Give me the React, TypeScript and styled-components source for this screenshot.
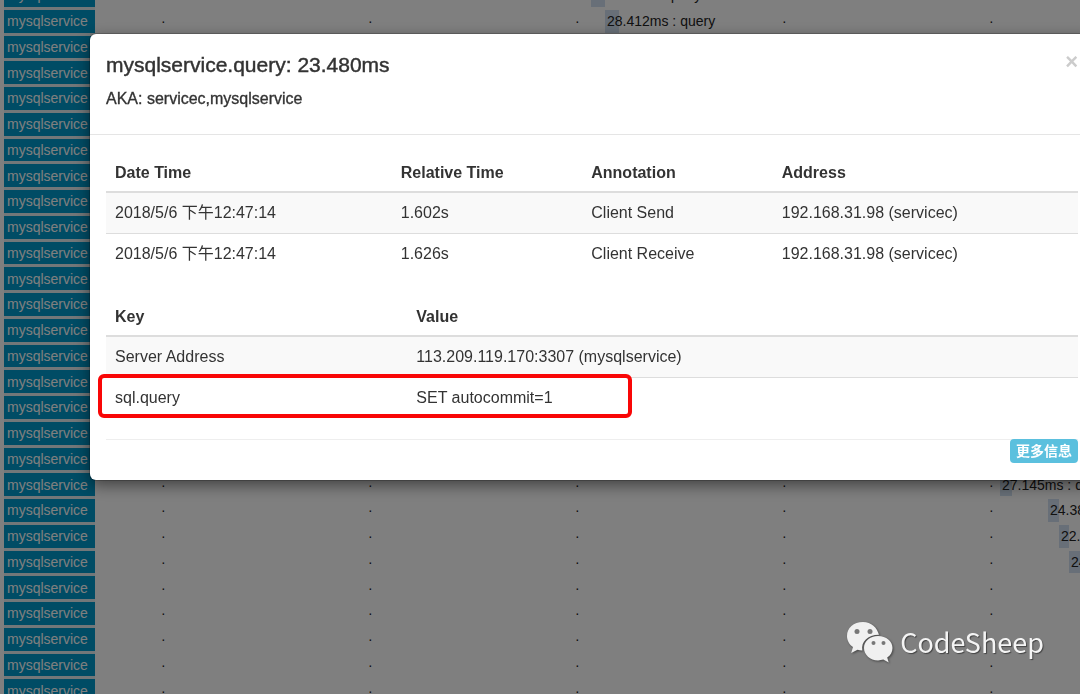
import React from "react";
import styled, { createGlobalStyle } from "styled-components";

const GlobalStyle = createGlobalStyle`
  *, *::before, *::after { box-sizing: border-box; }
  html, body { margin: 0; height: 100%; }
  body {
    overflow: hidden;
    background: #fff;
    color: #333;
    font-family: "Liberation Sans", "Noto Sans CJK SC", sans-serif;
    font-size: 16px;
    line-height: 20px;
  }
`;

const Trace = styled.main`
  display: flex;
  flex-direction: column;
  height: calc(100vh + 27px);
  margin-top: -16px;
  padding-left: 4px;
  overflow: hidden;
`;

const TraceRow = styled.div`
  display: flex;
  flex: 1;
  font-size: 14px;
`;

const Service = styled.div`
  display: flex;
  flex: none;
  align-items: center;
  width: 91px;
  padding-left: 3px;
  border-bottom: 3px solid #e4eff3;
  background: #0098ca;
  color: #fff;
`;

const Timeline = styled.div`
  position: relative;
  display: grid;
  flex: 1;
  grid-template-columns: repeat(5, 207px);
  align-items: center;
  min-width: 0;
  padding-left: 66px;
  padding-bottom: 3px;
  color: #222;
`;

const Span = styled.div<{ $left: number; $width: number }>`
  position: absolute;
  top: 0;
  bottom: 3px;
  left: ${(p) => p.$left}px;
  display: flex;
  align-items: center;
  width: ${(p) => p.$width}px;
  padding-left: 2px;
  background: #d0dff0;
  white-space: nowrap;
`;

const Backdrop = styled.div`
  position: fixed;
  inset: 0;
  overflow: hidden;
  padding: 34px 0 0 90px;
  background: rgba(0, 0, 0, 0.5);
`;

const Dialog = styled.section`
  margin-right: -14px;
  border-radius: 6px;
  background: #fff;
  box-shadow: 0 0 0 1px rgba(0, 0, 0, 0.2), 0 5px 16px rgba(0, 0, 0, 0.5);
`;

const DialogHeader = styled.header`
  display: flex;
  justify-content: space-between;
  height: 101px;
  padding: 16px 16px 0;
  border-bottom: 1px solid #e5e5e5;
`;

const Title = styled.h1`
  margin: 3px 0 12px;
  font-size: 21px;
  font-weight: 400;
  line-height: 24px;
  -webkit-text-stroke: thin;
`;

const Subtitle = styled.h2`
  margin: 0;
  font-size: 16px;
  font-weight: 400;
  -webkit-text-stroke: thin;
`;

const Close = styled.button`
  align-self: flex-start;
  margin: 0;
  padding: 0;
  border: 0;
  background: none;
  color: #ccc;
  font: bold 22px/24px "Liberation Sans", sans-serif;
`;

const DialogBody = styled.div`
  display: grid;
  gap: 22px;
  padding: 17px 16px 0;
`;

const TableArea = styled.div`
  position: relative;
`;

const Table = styled.table`
  width: 100%;
  border-collapse: separate;
  border-spacing: 0;
  table-layout: fixed;

  th, td {
    padding: 10px 9px;
    text-align: left;
    font-size: 16px;
    line-height: 20px;
  }
  th { border-bottom: 2px solid #ddd; padding: 11px 9px 8px; }
  tbody tr:nth-child(odd) { background: #f9f9f9; }
  tbody tr + tr td { border-top: 1px solid #ddd; }
`;

const Col = styled.col<{ $width?: string }>`
  width: ${(p) => p.$width ?? "auto"};
`;

const Highlight = styled.div`
  position: absolute;
  left: -8px;
  bottom: 0;
  width: 534px;
  height: 44px;
  border: 4px solid #f90606;
  border-radius: 6px;
`;

const DialogFooter = styled.footer`
  display: flex;
  justify-content: flex-end;
  height: 41px;
  margin: 21px 16px 0;
  border-top: 1px solid #eee;
`;

const MoreButton = styled.button`
  height: 24px;
  margin: -1px 0 0;
  padding: 0 6px;
  border: 0;
  border-radius: 4px;
  background: #5bc0de;
  color: #fff;
  font: bold 14px/24px "Liberation Sans", "Noto Sans CJK SC", sans-serif;
`;

const Watermark = styled.div`
  position: fixed;
  right: 36px;
  bottom: 30px;
  display: flex;
  align-items: center;
  gap: 7px;
  color: #f4f4f4;
  font: 400 27px/44px "Noto Sans CJK SC", sans-serif;
  text-shadow: 1px 1px 1px #444;

  svg { filter: drop-shadow(1px 1px 1px #444); }
`;

type SpanData = { left: number; width: number; label: string };

const ROWS = 28;
const spans: Record<number, SpanData> = {
  0: { left: 496, width: 14, label: "28.412ms : query" },
  1: { left: 510, width: 14, label: "28.412ms : query" },
  19: { left: 905, width: 12, label: "27.145ms : query" },
  20: { left: 953, width: 11, label: "24.38" },
  21: { left: 964, width: 10, label: "22." },
  22: { left: 974, width: 11, label: "24" },
};

const annotations = [
  ["2018/5/6 下午12:47:14", "1.602s", "Client Send", "192.168.31.98 (servicec)"],
  ["2018/5/6 下午12:47:14", "1.626s", "Client Receive", "192.168.31.98 (servicec)"],
];

const tags = [
  ["Server Address", "113.209.119.170:3307 (mysqlservice)"],
  ["sql.query", "SET autocommit=1"],
];

function DataTable({ heads, widths, rows }: { heads: string[]; widths: (string | undefined)[]; rows: string[][] }) {
  return (
    <Table>
      <colgroup>
        {heads.map((h, i) => <Col key={h} $width={widths[i]} />)}
      </colgroup>
      <thead>
        <tr>{heads.map((h) => <th key={h} scope="col">{h}</th>)}</tr>
      </thead>
      <tbody>
        {rows.map((row, r) => (
          <tr key={r}>{row.map((cell, c) => <td key={c}>{cell}</td>)}</tr>
        ))}
      </tbody>
    </Table>
  );
}

function ChatLogo() {
  return (
    <svg width="48" height="42" viewBox="0 0 48 42" aria-hidden="true">
      <path
        fill="#f0f0f0"
        d="M18 1C8.500 1 2 7 2 15c0 4.600 2.300 8.500 6 11.100L6.200 32l6.300-3.300c1.600.5 3 .7 4.800.7C16 21 22.500 13.800 34 13.800 32 6.500 26.500 1 18 1z"
      />
      <path
        fill="#f0f0f0"
        d="M33 15C25 15 19 20.300 19 27s6 12.400 14 12.400c1.900 0 3.700-.3 5.300-.8l5.400 2.900-1.500-4.900c3.400-2.300 5.300-5.700 5.300-9.600C47.500 20.300 41.300 15 33 15z"
      />
      <circle cx="12" cy="10.500" r="2.500" fill="#777" />
      <circle cx="25" cy="10.500" r="2.500" fill="#777" />
      <circle cx="28.500" cy="22" r="2" fill="#777" />
      <circle cx="38.500" cy="22" r="2" fill="#777" />
    </svg>
  );
}

export default function App() {
  return (
    <>
      <GlobalStyle />
      <Trace>
        {Array.from({ length: ROWS }, (_, i) => (
          <TraceRow key={i}>
            <Service>mysqlservice</Service>
            <Timeline>
              {[0, 1, 2, 3, 4].map((t) => <span key={t}>·</span>)}
              {spans[i] && (
                <Span $left={spans[i].left} $width={spans[i].width}>{spans[i].label}</Span>
              )}
            </Timeline>
          </TraceRow>
        ))}
      </Trace>
      <Backdrop>
        <Dialog role="dialog" aria-labelledby="span-title">
          <DialogHeader>
            <div>
              <Title id="span-title">mysqlservice.query: 23.480ms</Title>
              <Subtitle>AKA: servicec,mysqlservice</Subtitle>
            </div>
            <Close type="button" aria-label="Close">×</Close>
          </DialogHeader>
          <DialogBody>
            <DataTable
              heads={["Date Time", "Relative Time", "Annotation", "Address"]}
              widths={["29.4%", "19.6%", "19.6%", undefined]}
              rows={annotations}
            />
            <TableArea>
              <DataTable heads={["Key", "Value"]} widths={["31%", undefined]} rows={tags} />
              <Highlight />
            </TableArea>
          </DialogBody>
          <DialogFooter>
            <MoreButton type="button">更多信息</MoreButton>
          </DialogFooter>
        </Dialog>
      </Backdrop>
      <Watermark>
        <ChatLogo />
        CodeSheep
      </Watermark>
    </>
  );
}
